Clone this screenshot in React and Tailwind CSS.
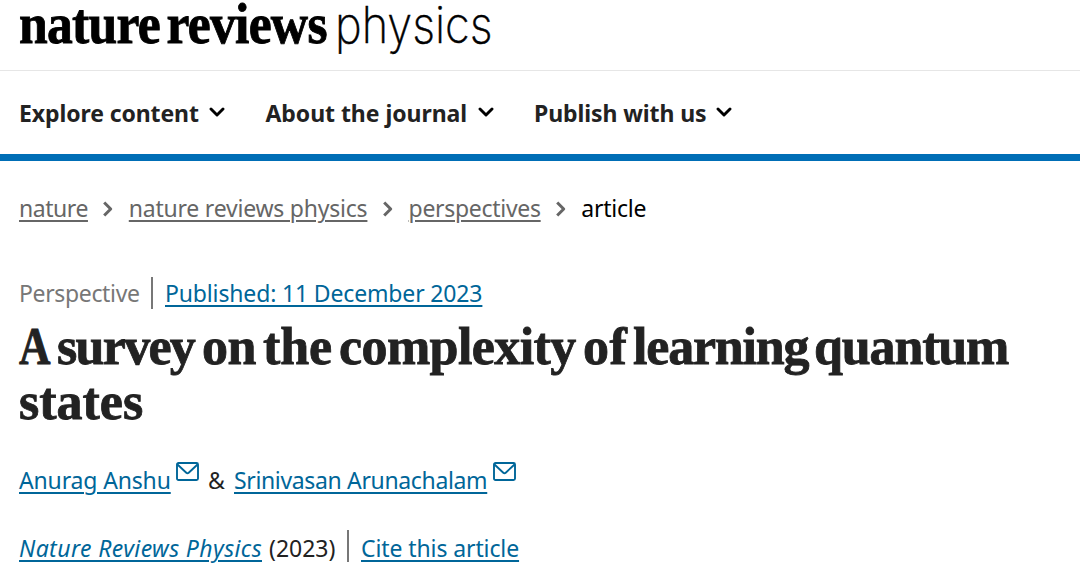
import React from 'react';

const menu = [
    { label: 'Explore content', style: 'w-[180px] tracking-[-0.1px]' },
    { label: 'About the journal', style: 'w-[202px] tracking-[-0.05px]' },
    { label: 'Publish with us', style: 'w-[172px] tracking-[-0.1px]' },
];

const crumbs = [
    { label: 'nature', style: 'w-[69px] tracking-[-0.45px]' },
    { label: 'nature reviews physics', style: 'w-[239px] tracking-[-0.22px]' },
    { label: 'perspectives', style: 'w-[132px] tracking-[-0.3px]' },
];

const titleWords = [
    { word: 'A', style: 'w-[38px] origin-left scale-x-[0.84]' },
    { word: 'survey', style: 'w-[145px] tracking-[-1.7px]' },
    { word: 'on', style: 'w-[61px] tracking-[-0.6px]' },
    { word: 'the', style: 'w-[76px] tracking-[-0.1px]' },
    { word: 'complexity', style: 'w-[244px] tracking-[-0.6px]' },
    { word: 'of', style: 'w-[50px] tracking-[0.5px]' },
    { word: 'learning', style: 'w-[181px] tracking-[-1.2px]' },
    { word: 'quantum', style: 'w-[194px] tracking-[-1.15px]' },
];

const link = 'text-[#006699] underline decoration-[1.5px] underline-offset-[3px]';

function ChevronDown() {
    return (
        <svg className="w-4 h-[10px] ml-[10px] mb-px shrink-0" viewBox="0 0 16 10" fill="none" stroke="#000" strokeWidth="2.9" strokeLinecap="round" strokeLinejoin="round">
            <path d="M2 2l6 6 6-6" />
        </svg>
    );
}

function ChevronRight() {
    return (
        <svg className="w-[10px] h-4 mx-[15.4px] mt-px shrink-0" viewBox="0 0 10 16" fill="none" stroke="#666" strokeWidth="3" strokeLinejoin="round">
            <path d="M1.2 1.5L7.7 8l-6.5 6.5" />
        </svg>
    );
}

function MailIcon() {
    return (
        <svg className="w-[23px] h-[19px] mb-[18px] ml-[5px] shrink-0" viewBox="0 0 23 19" fill="none" stroke="#006699" strokeWidth="1.9" strokeLinejoin="round">
            <rect x="1" y="1" width="21" height="17" rx="1.5" />
            <path d="M1.5 2.5l8.8 8.2a1.8 1.8 0 0 0 2.4 0l8.8-8.2" />
        </svg>
    );
}

export default function App() {
    return (
        <div className="h-[583px] overflow-hidden bg-white font-['Noto_Sans',sans-serif] text-[23px] leading-9 text-[#222] whitespace-nowrap">
            <header>
                <div className="h-[71px] pl-[19px] flex items-start border-b border-[#e6e6e6] text-black">
                    <span className="w-[316px] shrink-0 origin-left scale-x-[0.905] font-['Liberation_Serif',serif] font-bold text-[57px] leading-[47px] tracking-[-0.8px] [word-spacing:-6px] [-webkit-text-stroke:0.9px_black]">
                        nature reviews
                    </span>
                    <span className="origin-left scale-x-[0.885] font-['Inter',sans-serif] font-extralight text-[51px] leading-[50px] [-webkit-text-stroke:0.5px_black]">physics</span>
                </div>
                <nav className="h-[83px] pl-[19px] flex items-center font-bold">
                    {menu.map(({ label, style }) => (
                        <a key={label} className="flex items-center mr-[40.5px]">
                            <span className={style}>{label}</span>
                            <ChevronDown />
                        </a>
                    ))}
                </nav>
                <div className="h-[7px] bg-[#006eb6]" />
            </header>

            <main className="pl-[19px]">
                <nav className="mt-[29px] h-9 flex items-center text-[#666]">
                    {crumbs.map(({ label, style }) => (
                        <React.Fragment key={label}>
                            <a className={`underline decoration-[1.5px] underline-offset-[3px] ${style}`}>{label}</a>
                            <ChevronRight />
                        </React.Fragment>
                    ))}
                    <span className="text-black tracking-[-0.25px]">article</span>
                </nav>

                <div className="mt-[49px] h-9 flex items-center">
                    <span className="w-[120px] text-[#777] tracking-[-0.35px]">Perspective</span>
                    <span className="w-[1.5px] h-8 ml-[12px] mr-[12.5px] bg-[#777]" />
                    <a className={`${link} tracking-[-0.15px]`}>Published: 11 December 2023</a>
                </div>

                <h1 className="mt-2 font-['Liberation_Serif',serif] font-bold text-[52px] leading-[55px] [-webkit-text-stroke:0.8px_#222]">
                    <span className="flex">
                        {titleWords.map(({ word, style }) => (
                            <span key={word} className={`shrink-0 ${style}`}>{word} </span>
                        ))}
                    </span>
                    <span className="block">states</span>
                </h1>

                <div className="mt-[33px] h-9 flex items-center">
                    <a className={`${link} w-[152px] tracking-[-0.15px]`}>Anurag Anshu</a>
                    <MailIcon />
                    <span className="w-[26px] ml-[9px]">&amp;</span>
                    <a className={`${link} w-[254px] tracking-[-0.35px]`}>Srinivasan Arunachalam</a>
                    <MailIcon />
                </div>

                <div className="mt-8 h-9 flex items-center">
                    <a className={`${link} italic w-[243px] tracking-[0.4px]`}>Nature Reviews Physics</a>
                    <span className="ml-[7px] w-[66px]">(2023)</span>
                    <span className="w-[1.5px] h-8 ml-[12px] mr-[12.5px] -mt-1 bg-[#777]" />
                    <a className={`${link} tracking-[-0.1px]`}>Cite this article</a>
                </div>
            </main>
        </div>
    );
}
